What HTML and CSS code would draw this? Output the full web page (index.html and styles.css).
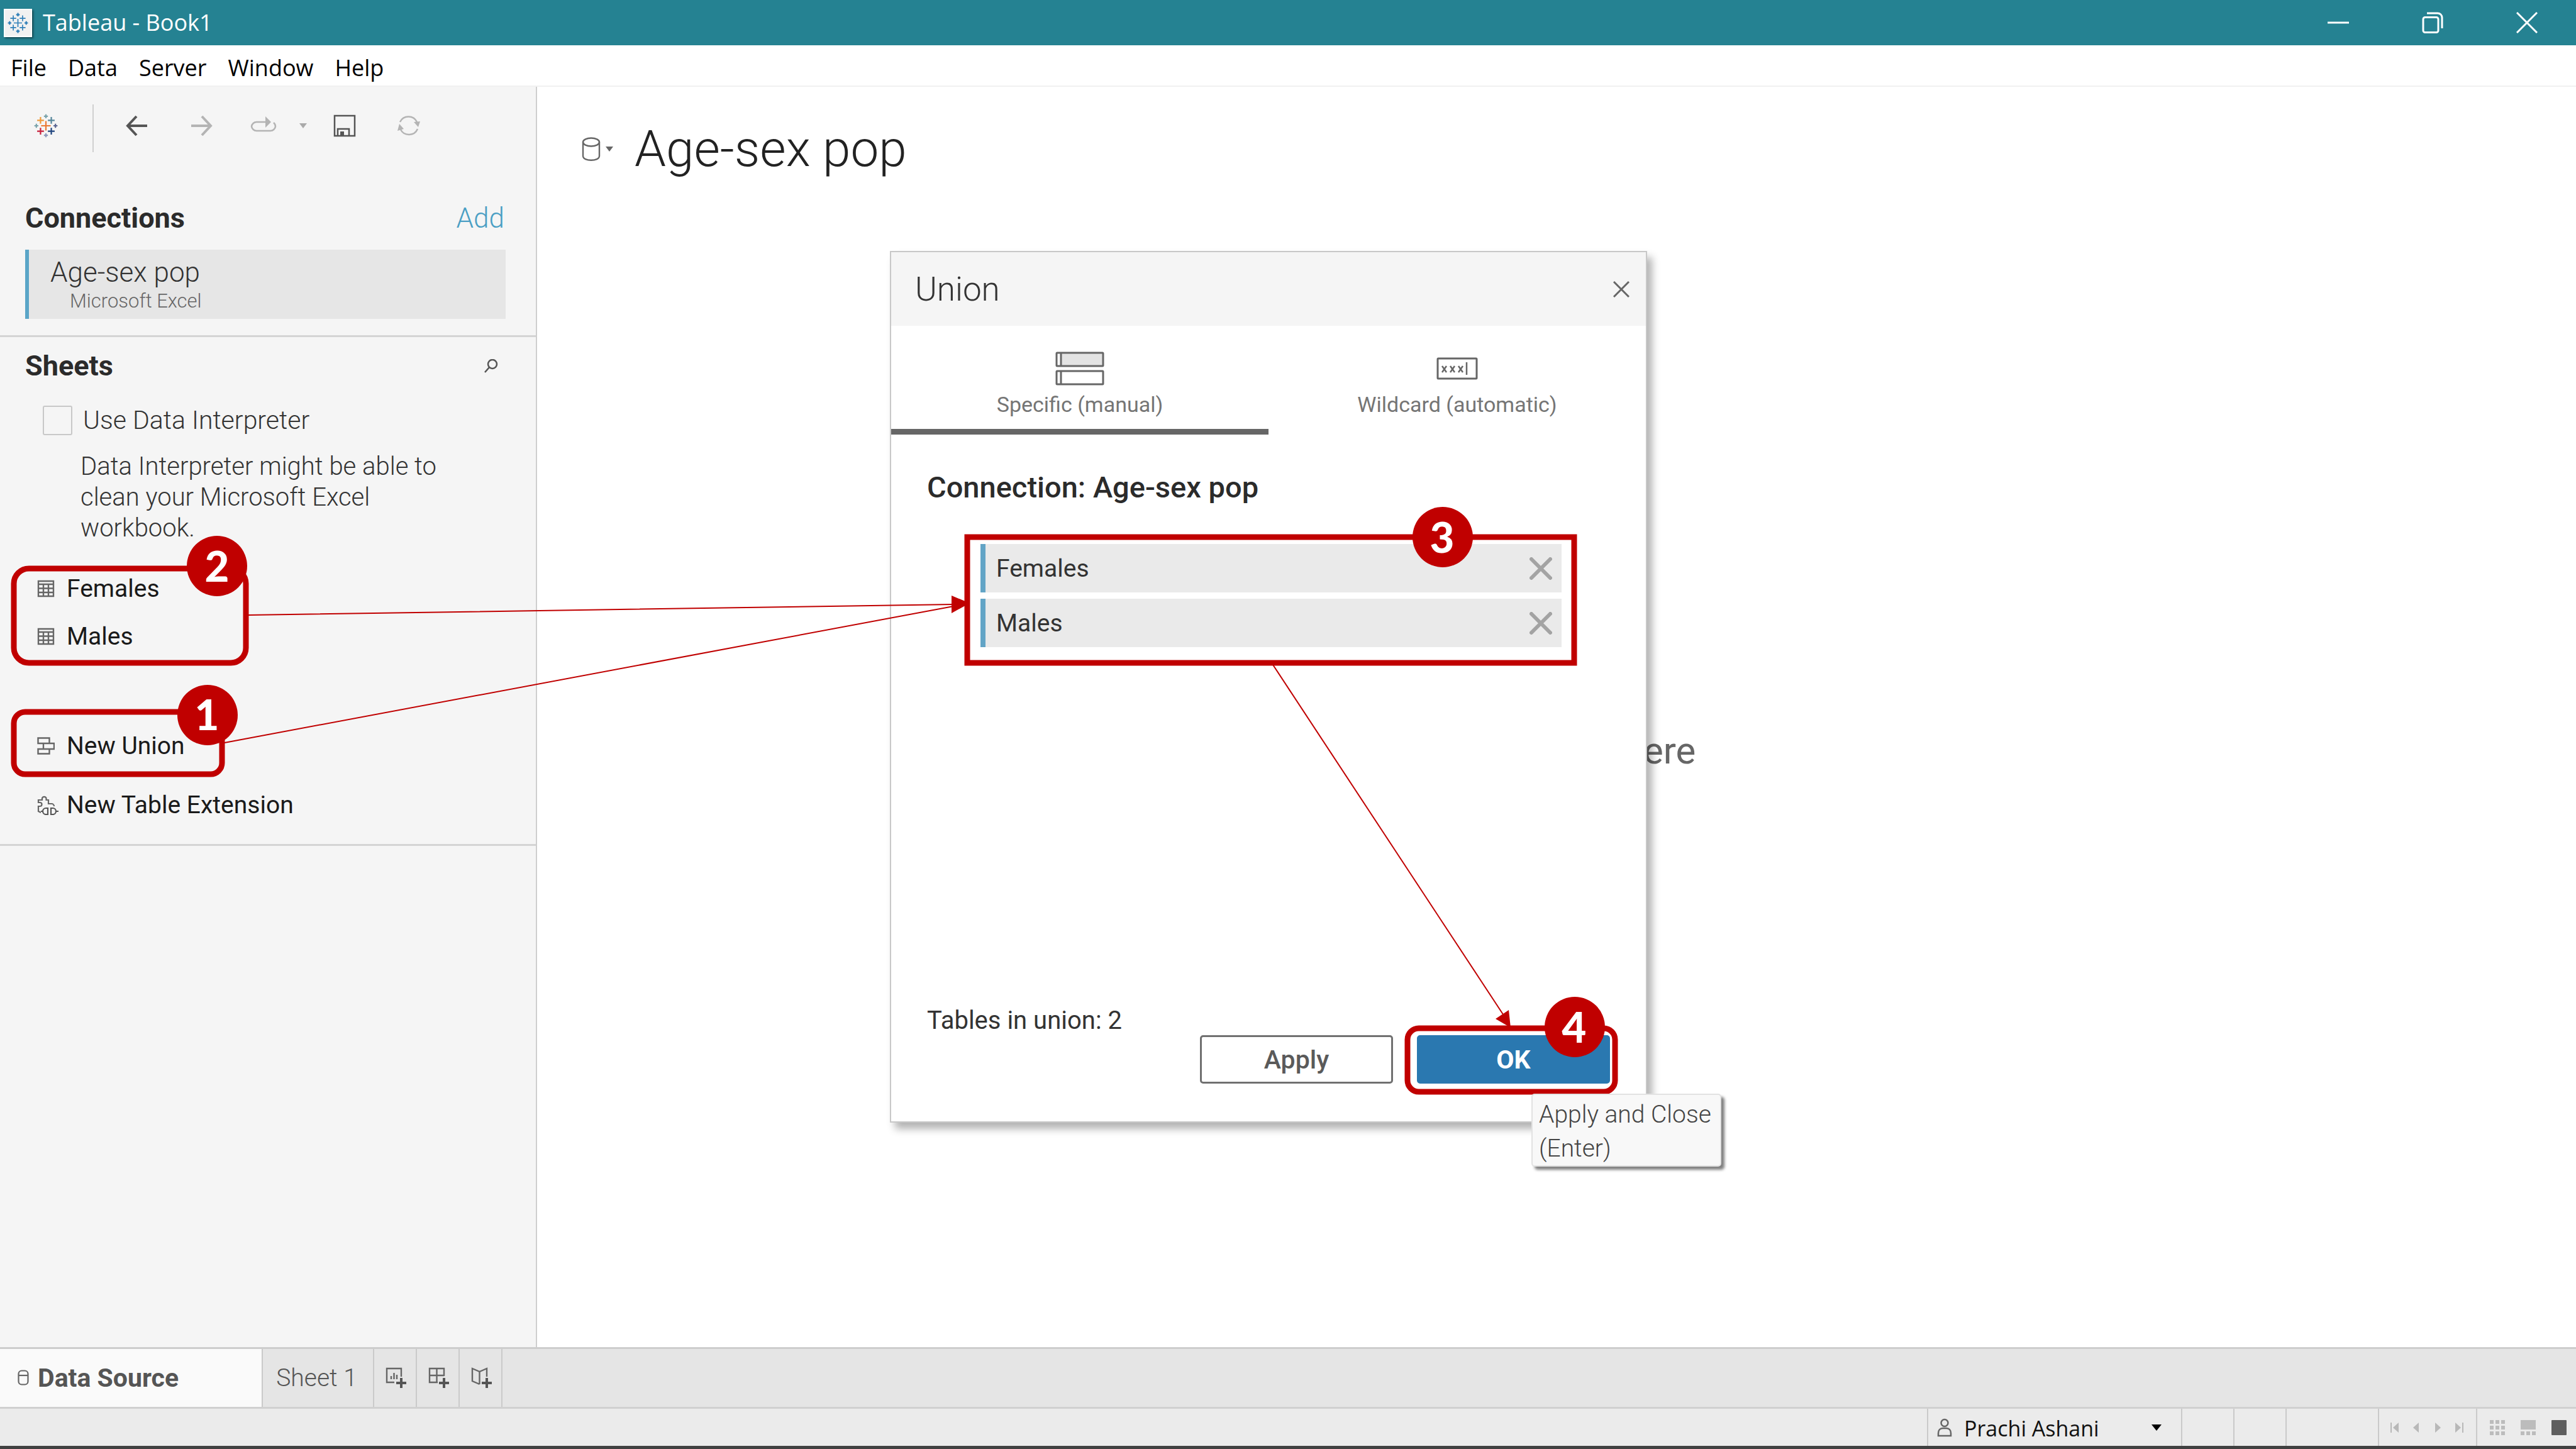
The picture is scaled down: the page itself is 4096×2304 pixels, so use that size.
FILE: index.html
```html
<!DOCTYPE html>
<html lang="en">
<head>
<meta charset="utf-8">
<title>Tableau - Book1</title>
<link rel="stylesheet" href="styles.css">
</head>
<body>
<svg class="defs" aria-hidden="true">
  <symbol id="i-table" viewBox="0 0 28 28"><path d="M2 2h24v24H2zM2 7h24M2 13.500h24M2 20h24M10 7v19M18 7v19" fill="none" stroke="#666" stroke-width="2.400"/></symbol>
  <symbol id="i-cross" viewBox="0 0 36 36"><path d="M3 3l30 30M33 3L3 33" stroke="#a3a3a3" stroke-width="6" stroke-linecap="round"/></symbol>
  <symbol id="i-plus" viewBox="0 0 16 16"><path d="M8 0v16M0 8h16" stroke="#555" stroke-width="4"/></symbol>
</svg>

<div class="app">
  <header class="titlebar">
    <span class="app-icon">
      <svg viewBox="-60 -60 120 120" stroke="#2f7fb8" stroke-width="6" fill="none">
        <path d="M-24 0H24M0-24V24"/>
        <path d="M-44-27H-10M-27-44V-10M10-27H44M27-44V-10M-44 27H-10M-27 10V44M10 27H44M27 10V44"/>
        <path d="M-10-48H10M0-58V-38M-10 48H10M0 38V58M-58 0H-38M-48-10V10M38 0H58M48-10V10" stroke-width="8"/>
      </svg>
    </span>
    <h1 class="titlebar-text">Tableau - Book1</h1>
    <div class="window-buttons">
      <button aria-label="Minimize"><svg viewBox="0 0 34 34"><path d="M0 17h34"/></svg></button>
      <button aria-label="Restore"><svg viewBox="0 0 34 34"><rect x="2" y="8.500" width="24" height="24" rx="3"/><path d="M8 2h17a7 7 0 0 1 7 7v17"/></svg></button>
      <button aria-label="Close"><svg viewBox="0 0 34 34"><path d="M1 1l32 32M33 1L1 33"/></svg></button>
    </div>
  </header>

  <nav class="menubar">
    <a href="#file">File</a><a href="#data">Data</a><a href="#server">Server</a><a href="#window">Window</a><a href="#help">Help</a>
  </nav>

  <div class="workspace">
    <aside class="sidebar">
      <div class="toolbar">
        <button class="tool tool-logo" aria-label="Start page">
          <svg viewBox="-60 -60 120 120" width="38" height="38" stroke-width="7" fill="none">
            <path d="M-24 0H24M0-24V24" stroke="#eb7a34"/>
            <path d="M-44-27H-10M-27-44V-10" stroke="#ee9a3a"/>
            <path d="M10-27H44M27-44V-10" stroke="#55869a"/>
            <path d="M-44 27H-10M-27 10V44" stroke="#c8203c"/>
            <path d="M10 27H44M27 10V44" stroke="#1f447e"/>
            <path d="M-10-48H10M0-58V-38M-58 0H-38M-48-10V10" stroke="#7aa3ab"/>
            <path d="M-10 48H10M0 38V58" stroke="#8c98bb"/>
            <path d="M38 0H58M48-10V10" stroke="#5a6591"/>
          </svg>
        </button>
        <span class="tool-divider"></span>
        <button class="tool tool-back" aria-label="Undo"><svg width="34" height="34" viewBox="0 0 34 34"><path d="M34 17H3M17 2L3 17l14 15" fill="none" stroke="#555" stroke-width="4"/></svg></button>
        <button class="tool tool-forward" aria-label="Redo"><svg width="34" height="34" viewBox="0 0 34 34"><path d="M0 17h31M17 2l14 15-14 15" fill="none" stroke="#b4b4b4" stroke-width="4"/></svg></button>
        <button class="tool tool-replay" aria-label="Replay"><svg width="42" height="34" viewBox="0 0 42 34"><path d="M24 11H10a8 8 0 0 0-8 7 8 8 0 0 0 8 7h22a8 8 0 0 0 8-7 8 8 0 0 0-3-6" fill="none" stroke="#b4b4b4" stroke-width="2.500"/><path d="M24 2l9 9-9 9z" fill="#b4b4b4"/></svg></button>
        <button class="tool tool-caret" aria-label="Replay options"><svg width="12" height="8" viewBox="0 0 12 8"><path d="M0 0h12L6 8z" fill="#aaa"/></svg></button>
        <button class="tool tool-save" aria-label="Save"><svg width="36" height="36" viewBox="0 0 36 36"><path d="M2 2h32v32H2zM7 34V23h18v11" fill="none" stroke="#555" stroke-width="2.500"/><path d="M11 27h6v8h-6z" fill="#555"/></svg></button>
        <button class="tool tool-refresh" aria-label="Refresh"><svg width="36" height="34" viewBox="0 0 36 34"><path d="M4 11A15 15 0 0 1 31 11M32 22A15 15 0 0 1 5 23" fill="none" stroke="#b4b4b4" stroke-width="2.500"/><path d="M26 11l10-1-3 9zM0 25l10-3-7-8z" fill="#b4b4b4"/></svg></button>
      </div>

      <section class="connections">
        <div class="section-head"><h2>Connections</h2><a class="add" href="#add">Add</a></div>
        <div class="connection"><div class="connection-name">Age-sex pop</div><div class="connection-type">Microsoft Excel</div></div>
      </section>

      <section class="sheets">
        <div class="section-head"><h2>Sheets</h2>
          <button class="search" aria-label="Search"><svg width="22" height="22" viewBox="0 0 22 22"><circle cx="13" cy="8" r="7" fill="none" stroke="#555" stroke-width="2.500"/><path d="M8 13l-7 8" stroke="#555" stroke-width="2.500"/></svg></button>
        </div>
        <label class="interpreter"><input type="checkbox"><span>Use Data Interpreter</span></label>
        <p class="hint">Data Interpreter might be able to clean your Microsoft Excel workbook.</p>
        <ul class="sheet-list">
          <li><svg width="28" height="28"><use href="#i-table"/></svg><span>Females</span></li>
          <li><svg width="28" height="28"><use href="#i-table"/></svg><span>Males</span></li>
        </ul>
        <ul class="action-list">
          <li><svg width="28" height="28" viewBox="0 0 28 28"><path d="M1.500 1.500h18v8.500h-18zM10 10h17v9H10zM1.500 19h18v7.500h-18z" fill="none" stroke="#666" stroke-width="2.400"/></svg><span>New Union</span></li>
          <li><svg width="34" height="32" viewBox="0 0 34 32"><path d="M6 28l-4-2v-8h2.500a3 3 0 0 0 0-6H2V8h6V5a3.500 3.500 0 0 1 6.500 0v3H18v6h5a4 4 0 0 1 4 4" fill="none" stroke="#666" stroke-width="2.200"/><path d="M17 21v10h-3a5 5 0 0 1 0-10zM22 21v10h3a5 5 0 0 0 0-10zM9 26H6M30 26h4" fill="none" stroke="#555" stroke-width="2.200"/></svg><span>New Table Extension</span></li>
        </ul>
      </section>
    </aside>

    <main class="canvas">
      <div class="datasource">
        <button class="ds-menu" aria-label="Data source menu"><svg width="50" height="38" viewBox="0 0 50 38"><ellipse cx="15" cy="8" rx="13" ry="6.500"/><path d="M2 8v22c0 9 26 9 26 0V8"/><path class="ds-caret" d="M38 15h12l-6 8z"/></svg></button>
        <h2>Age-sex pop</h2>
      </div>
      <p class="drop-hint">ere</p>

      <div class="dialog" role="dialog" aria-labelledby="union-title">
        <div class="dialog-head"><h3 id="union-title">Union</h3><button aria-label="Close dialog"><svg width="26" height="26" viewBox="0 0 26 26"><path d="M1 1l24 24M25 1L1 25" stroke="#666" stroke-width="3"/></svg></button></div>
        <div class="dialog-tabs">
          <button class="dialog-tab is-active">
            <svg width="78" height="54" viewBox="0 0 78 54"><path d="M3 2h72v20H3z" fill="#e3e3e3"/><path d="M3 2h5v20H3z" fill="#fff"/><g fill="none" stroke="#666" stroke-width="3"><rect x="2" y="2" width="74" height="21" rx="1"/><rect x="2" y="31" width="74" height="21" rx="1"/><path d="M9 2v21M9 31v21"/></g></svg>
            <span>Specific (manual)</span>
          </button>
          <button class="dialog-tab">
            <svg width="66" height="54" viewBox="0 0 66 54"><rect x="2" y="11" width="62" height="32" rx="1" fill="none" stroke="#666" stroke-width="3"/><path d="M9 23l7 10M16 23l-7 10M22 23l7 10M29 23l-7 10M35 23l7 10M42 23l-7 10M48 17v20" stroke="#666" stroke-width="2.500"/></svg>
            <span>Wildcard (automatic)</span>
          </button>
        </div>
        <div class="dialog-body">
          <h4>Connection: Age-sex pop</h4>
          <ul class="tables">
            <li><span>Females</span><button aria-label="Remove Females"><svg width="36" height="36"><use href="#i-cross"/></svg></button></li>
            <li><span>Males</span><button aria-label="Remove Males"><svg width="36" height="36"><use href="#i-cross"/></svg></button></li>
          </ul>
          <p class="count">Tables in union: 2</p>
          <div class="dialog-actions"><button class="btn">Apply</button><button class="btn btn-primary">OK</button></div>
        </div>
      </div>
    </main>
  </div>

  <nav class="tabbar">
    <button class="tab is-current"><svg width="18" height="26" viewBox="0 0 18 26"><rect x="1.500" y="1.500" width="15" height="22" rx="5" fill="none" stroke="#666" stroke-width="2.200"/><path d="M2 9h14" stroke="#666" stroke-width="2.200"/></svg><span>Data Source</span></button>
    <button class="tab tab-sheet">Sheet 1</button>
    <button class="tab tab-new" aria-label="New worksheet"><svg width="34" height="34" viewBox="0 0 34 34"><path d="M14 24H2V2h23v13M9 14v5M13.500 9v10M18 12v7" fill="none" stroke="#666" stroke-width="2.400"/><use href="#i-plus" x="17" y="17" width="16" height="16"/></svg></button>
    <button class="tab tab-new" aria-label="New dashboard"><svg width="34" height="34" viewBox="0 0 34 34"><path d="M15 24H2V2h23v12M2 13h23M13.500 2v22" fill="none" stroke="#666" stroke-width="2.400"/><use href="#i-plus" x="17" y="17" width="16" height="16"/></svg></button>
    <button class="tab tab-new" aria-label="New story"><svg width="34" height="34" viewBox="0 0 34 34"><path d="M13.500 27L2 22V2l11.500 5L25 2v13M13.500 7v20" fill="none" stroke="#666" stroke-width="2.400"/><use href="#i-plus" x="17" y="17" width="16" height="16"/></svg></button>
  </nav>

  <footer class="statusbar">
    <div class="user">
      <svg width="24" height="30" viewBox="0 0 24 30"><circle cx="12" cy="7.500" r="5.500"/><path d="M2 28v-4c0-5 3-8 7-8h6c4 0 7 3 7 8v4z"/></svg>
      <select aria-label="User"><option>Prachi Ashani</option></select>
      <svg class="user-caret" width="16" height="10" viewBox="0 0 16 10"><path d="M0 0h16L8 10z"/></svg>
    </div>
    <div class="cell"></div><div class="cell"></div><div class="cell cell-wide"></div>
    <div class="pager">
      <button aria-label="First"><svg width="14" height="16" viewBox="0 0 14 16"><path d="M0 0h2v16H0zM13 0v16L4 8z"/></svg></button>
      <button aria-label="Previous"><svg width="14" height="16" viewBox="0 0 14 16"><path d="M11 0v16L2 8z"/></svg></button>
      <button aria-label="Next"><svg width="14" height="16" viewBox="0 0 14 16"><path d="M3 0v16l9-8z"/></svg></button>
      <button aria-label="Last"><svg width="14" height="16" viewBox="0 0 14 16"><path d="M12 0h2v16h-2zM1 0v16l9-8z"/></svg></button>
    </div>
    <div class="views">
      <button aria-label="Grid view"><svg width="24" height="24" viewBox="0 0 24 24"><path d="M0 0h6v6H0zM9 0h6v6H9zM18 0h6v6h-6zM0 9h6v6H0zM9 9h6v6H9zM18 9h6v6h-6zM0 18h6v6H0zM9 18h6v6H9zM18 18h6v6h-6z"/></svg></button>
      <button aria-label="Filmstrip view"><svg width="24" height="24" viewBox="0 0 24 24"><path d="M0 0h24v15H0zM0 18h6v6H0zM9 18h6v6H9zM18 18h6v6h-6z"/></svg></button>
      <button class="is-on" aria-label="Sheet view"><svg width="24" height="24" viewBox="0 0 24 24"><rect width="24" height="24" rx="1"/></svg></button>
    </div>
  </footer>

  <svg class="callouts">
    <g class="lines">
      <path d="M395 978L1516 961M357 1181L1516 964M2024 1057L2392 1616"/>
    </g>
    <g class="heads">
      <path d="M1513 947L1542 959 1513 975zM2378 1620L2399 1606 2402 1634z"/>
    </g>
    <g class="boxes">
      <rect x="22" y="904" width="369" height="150" rx="24"/>
      <rect x="22" y="1132" width="331" height="99" rx="18"/>
      <rect x="1538" y="854" width="965" height="200"/>
      <rect x="2238" y="1635" width="330" height="101" rx="18"/>
    </g>
    <g class="badges">
      <circle cx="330" cy="1137" r="48"/><text x="329" y="1161">1</text>
      <circle cx="345" cy="900" r="48"/><text x="345" y="925">2</text>
      <circle cx="2294" cy="854" r="48"/><text x="2293" y="879">3</text>
      <circle cx="2504" cy="1633" r="48"/><text x="2503" y="1658">4</text>
    </g>
  </svg>
  <div class="tooltip" role="tooltip">Apply and Close<br>(Enter)</div>
</div>
</body>
</html>
```
FILE: styles.css
```css
* { box-sizing: border-box; }
html, body { margin: 0; }
body { font-family: Roboto, "Liberation Sans", sans-serif; font-weight: 300; color: #333; background: #fff; }
h1, h2, h3, h4, p, ul { margin: 0; padding: 0; }
ul { list-style: none; }
a { text-decoration: none; color: inherit; }
svg { display: block; flex: none; }
button { font: inherit; color: inherit; background: none; border: 0; padding: 0; margin: 0; }
.defs { position: absolute; width: 0; height: 0; }

.app { position: relative; display: flex; flex-direction: column; min-height: 100vh; overflow: hidden; border-bottom: 5px solid #404040; }

/* Window frame */
.titlebar { display: flex; align-items: center; height: 72px; padding-left: 6px; background: #258292; color: #fff; }
.app-icon { width: 45px; height: 45px; padding: 4px; background: #f1f1f1; border: 2px solid #fff; box-shadow: 2px 2px 3px rgba(0, 0, 0, .45); }
.titlebar-text { margin-left: 17px; font: 400 36px/54px "Open Sans", sans-serif; }
.window-buttons { display: flex; gap: 116px; margin-left: auto; padding-right: 61px; }
.window-buttons svg { width: 34px; height: 34px; fill: none; stroke: #fff; stroke-width: 3px; }
.menubar { display: flex; gap: 34px; height: 66px; padding-left: 17px; border-bottom: 2px solid #f1f1f1; font: 400 36px/72px "Open Sans", sans-serif; color: #000; }

.workspace { display: flex; flex: 1; }

/* Sidebar */
.sidebar { width: 854px; flex: none; background: #f5f5f5; border-right: 2px solid #cfcfcf; }
.toolbar { display: flex; align-items: center; height: 124px; padding-left: 54px; }
.tool-divider { width: 2px; height: 76px; margin: 8px 51px 0 55px; background: #d0d0d0; }
.tool-forward { margin-left: 70px; }
.tool-replay { margin-left: 60px; }
.tool-caret { margin-left: 36px; }
.tool-save { margin-left: 42px; }
.tool-refresh { margin-left: 66px; }
.connections { padding: 60px 50px 26px 40px; border-bottom: 3px solid #d4d4d4; }
.section-head { display: flex; align-items: center; justify-content: space-between; height: 50px; }
.section-head h2 { font-size: 45px; line-height: 50px; font-weight: 700; color: #2b2b2b; }
.add { font-size: 44px; line-height: 50px; color: #4a9fc4; }
.connection { margin: 25px -2px 0 0; padding: 11px 0 7px 65px; background: #e6e6e6; border-left: 6px solid #5aa5c7; }
.connection-name { margin-left: -31px; font-size: 44px; line-height: 50px; }
.connection-type { font-size: 31px; line-height: 42px; color: #666; }
.sheets { padding: 21px 60px 24px 40px; border-bottom: 3px solid #d4d4d4; }
.interpreter { display: flex; align-items: center; gap: 17px; margin: 36px 0 0 28px; font-size: 41px; line-height: 50px; }
.interpreter input { appearance: none; width: 47px; height: 47px; margin: 0; border: 2px solid #c8c8c8; border-radius: 3px; }
.hint { max-width: 610px; margin: 24px 0 0 88px; font-size: 40px; line-height: 49px; }
.sheet-list { margin-top: 34px; }
.action-list { display: grid; gap: 18px; margin-top: 98px; }
.sheet-list li, .action-list li { display: grid; grid-template-columns: 47px auto; align-items: center; height: 76px; margin-left: 19px; font-size: 39px; font-weight: 400; color: #1a1a1a; }

/* Canvas */
.canvas { position: relative; flex: 1; background: #fff; }
.datasource { display: flex; align-items: center; gap: 34px; padding: 44px 0 0 71px; }
.ds-menu svg { fill: none; stroke: #666; stroke-width: 2.400px; }
.ds-menu .ds-caret { fill: #666; stroke: none; }
.datasource h2 { font-size: 80px; line-height: 110px; font-weight: 300; color: #222; }
.drop-hint { position: absolute; left: 1759px; top: 1018px; font-size: 60px; line-height: 76px; font-weight: 400; color: #666; }

/* Dialog */
.dialog { position: absolute; left: 561px; top: 261px; display: flex; flex-direction: column; width: 1204px; height: 1386px; background: #fff; border: 2px solid #c8c8c8; box-shadow: 8px 10px 12px rgba(0, 0, 0, .3); }
.dialog-head { display: flex; align-items: center; justify-content: space-between; height: 117px; padding: 0 26px 0 38px; background: #f5f5f5; }
.dialog-head h3 { font-size: 53px; line-height: 60px; font-weight: 300; }
.dialog-tabs { display: grid; grid-template-columns: 1fr 1fr; height: 173px; }
.dialog-tab { display: flex; flex-direction: column; align-items: center; gap: 10px; padding-top: 41px; border-bottom: 9px solid transparent; font-size: 34px; line-height: 40px; font-weight: 400; color: #757575; }
.dialog-tab.is-active { border-bottom-color: #666; }
.dialog-body { display: flex; flex-direction: column; flex: 1; padding: 56px 57px 60px 57px; }
.dialog-body h4 { font-size: 47px; line-height: 56px; font-weight: 500; color: #2b2b2b; }
.tables { display: grid; gap: 10px; margin: 62px 77px 0 85px; }
.tables li { display: flex; align-items: center; justify-content: space-between; height: 77px; padding: 0 15px 0 17px; background: #eaeaea; border-left: 8px solid #62a4c6; font-size: 39px; font-weight: 400; }
.count { margin-top: auto; font-size: 40px; line-height: 46px; font-weight: 400; }
.dialog-actions { display: flex; justify-content: flex-end; gap: 38px; }
.btn { width: 307px; height: 77px; border: 3px solid #707070; border-radius: 5px; font-size: 41px; font-weight: 500; color: #5a5a5a; }
.btn-primary { background: #2a78b0; border-color: #2a78b0; font-weight: 700; color: #fff; }

/* Sheet tabs */
.tabbar { display: flex; height: 95px; background: #e5e5e5; border-top: 3px solid #cdcdcd; color: #555; }
.tab { display: flex; align-items: center; justify-content: center; border-right: 2px solid #cacaca; }
.is-current { justify-content: flex-start; gap: 14px; width: 418px; padding-left: 28px; background: #fafafa; font-size: 41px; font-weight: 700; }
.tab-sheet { width: 177px; padding-right: 4px; font-size: 39px; }
.tab-new { width: 68px; padding-left: 4px; }

/* Status bar */
.statusbar { display: flex; justify-content: flex-end; height: 62px; background: #ebebeb; border-top: 3px solid #d0d0d0; }
.statusbar > div { display: flex; align-items: center; border-left: 2px solid #cacaca; }
.user { width: 404px; padding-left: 14px; fill: none; stroke: #666; stroke-width: 2.500px; }
.user select { appearance: none; width: 300px; margin: 0; padding: 2px 0 0 19px; border: 0; background: none; font: 400 34px/50px "Open Sans", sans-serif; color: #111; }
.user-caret { margin-left: 17px; fill: #000; stroke: none; }
.cell { width: 83px; }
.cell-wide { width: 147px; }
.pager { gap: 20px; width: 156px; padding-left: 18px; fill: #b8b8b8; }
.views { gap: 25px; width: 159px; padding-left: 20px; fill: #bcbcbc; }
.is-on { fill: #5e5e5e; }

/* Step callouts */
.callouts { position: absolute; left: 0; top: 0; width: 100%; height: 100%; pointer-events: none; }
.lines { fill: none; stroke: #c00000; stroke-width: 2px; }
.heads { fill: #c00000; }
.boxes { fill: none; stroke: #c00000; stroke-width: 9px; }
.badges { fill: #c00000; }
.badges text { fill: #fff; font: 900 67px Lato, sans-serif; text-anchor: middle; }

.tooltip { position: absolute; left: 2435px; top: 1739px; padding: 4px 14px 0 10px; height: 116px; background: #f8f8f8; border: 2px solid #e2e2e2; border-radius: 5px; box-shadow: 5px 5px 4px rgba(0, 0, 0, .5); font-size: 39px; line-height: 54px; color: #444; }
```
